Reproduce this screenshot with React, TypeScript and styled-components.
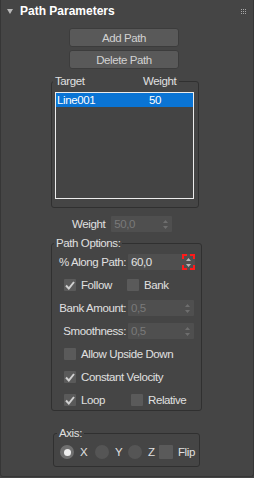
import React from "react";
import styled, { createGlobalStyle } from "styled-components";

const GlobalStyle = createGlobalStyle`
  html, body {
    margin: 0;
    padding: 0;
    background: #444444;
  }
  body {
    font-family: "Liberation Sans", Arial, sans-serif;
    font-size: 11.5px;
    letter-spacing: -0.4px;
    color: #e0e0e0;
  }
`;

const Panel = styled.div`
  box-sizing: border-box;
  width: 254px;
  height: 477px;
  border: 1px solid #363636;
  border-top: 0;
  border-radius: 0 0 3px 3px;
  background: #454545;
  display: flex;
  flex-direction: column;
`;

const TitleBar = styled.div`
  height: 22px;
  display: flex;
  align-items: center;
  padding: 0 7px 0 6px;
`;

const Title = styled.div`
  margin-left: 7px;
  font-size: 12px;
  font-weight: bold;
  letter-spacing: 0;
  color: #ffffff;
`;

const Grip = styled.svg`
  margin-left: auto;
`;

const Body = styled.div`
  display: flex;
  flex-direction: column;
  align-items: flex-start;
  padding-left: 50px;
`;

const Button = styled.div<{ $top: number }>`
  box-sizing: border-box;
  width: 110px;
  height: 19px;
  margin: ${(p) => p.$top}px 0 0 18px;
  background: #595959;
  border: 1px solid #3c3c3c;
  border-radius: 3px;
  display: flex;
  align-items: center;
  justify-content: center;
  color: #d2d2d2;
`;

const Group = styled.fieldset<{ $width: number; $top: number; $left?: number }>`
  box-sizing: border-box;
  width: ${(p) => p.$width}px;
  min-width: 0;
  margin: ${(p) => p.$top}px 0 0 ${(p) => p.$left || 0}px;
  padding: 0;
  border: 1px solid #303030;
  border-radius: 3px;
`;

const Legend = styled.legend<{ $shift: number }>`
  margin-left: ${(p) => p.$shift}px;
  padding: 0 2px;
  line-height: 14px;
  height: 14px;
  color: #e0e0e0;
`;

const ListLegend = styled(Legend)`
  display: flex;
  width: 126px;
  box-sizing: border-box;
`;

const LegendCol = styled.span<{ $width?: number }>`
  width: ${(p) => (p.$width ? `${p.$width}px` : "auto")};
`;

const ListBox = styled.div`
  box-sizing: border-box;
  width: 139px;
  height: 107px;
  margin: 4px 0 8px 3px;
  border: 1px solid #ececec;
  background: #444444;
`;

const ListRow = styled.div<{ $selected?: boolean }>`
  height: 14px;
  display: grid;
  grid-template-columns: 92px 1fr;
  align-items: center;
  padding-left: 1px;
  background: ${(p) => (p.$selected ? "#0a74d4" : "transparent")};
  color: #ffffff;
`;

const WeightRow = styled.div`
  display: flex;
  align-items: center;
  gap: 6px;
  margin: 8px 0 0 21px;
  height: 16px;
`;

const Label = styled.span`
  color: #e0e0e0;
  white-space: nowrap;
`;

const RightLabel = styled(Label)`
  text-align: right;
`;

const Field = styled.div<{ $width: number; $disabled?: boolean }>`
  position: relative;
  box-sizing: border-box;
  width: ${(p) => p.$width}px;
  height: 16px;
  background: #4f4f4f;
  border-radius: 1px;
  display: flex;
  align-items: center;
  padding: 0 3px;
  color: ${(p) => (p.$disabled ? "#7a7a7a" : "#e4e4e4")};
`;

const Arrows = styled.svg`
  margin-left: auto;
  margin-right: 1px;
`;

const Marks = styled.svg`
  position: absolute;
  right: 0;
  top: 0;
`;

const Options = styled.div`
  display: flex;
  flex-direction: column;
  gap: 7px;
  padding: 4px 0 2px 0;
`;

const SpinRow = styled.div`
  display: grid;
  grid-template-columns: 74px 66px;
  column-gap: 2px;
  height: 16px;
  align-items: center;
`;

const CheckRow = styled.div`
  display: flex;
  align-items: center;
  height: 16px;
  padding-left: 12px;
`;

const CheckItem = styled.div<{ $width?: number }>`
  display: flex;
  align-items: center;
  gap: 5px;
  width: ${(p) => (p.$width ? `${p.$width}px` : "auto")};
`;

const Box = styled.div<{ $size: number }>`
  width: ${(p) => p.$size}px;
  height: ${(p) => p.$size}px;
  background: #5a5a5a;
  border-radius: 1px;
  display: flex;
  align-items: center;
  justify-content: center;
`;

const AxisRow = styled.div`
  display: flex;
  align-items: center;
  height: 14px;
  padding: 5px 0 7px 6px;
`;

const RadioItem = styled.div<{ $width: number }>`
  display: flex;
  align-items: center;
  gap: 6px;
  width: ${(p) => p.$width}px;
`;

const Radio = styled.div<{ $on?: boolean }>`
  box-sizing: border-box;
  width: 14px;
  height: 14px;
  border-radius: 50%;
  background: ${(p) => (p.$on ? "#707070" : "#555555")};
  display: flex;
  align-items: center;
  justify-content: center;
  &::after {
    content: "";
    display: ${(p) => (p.$on ? "block" : "none")};
    width: 7px;
    height: 7px;
    border-radius: 50%;
    background: #efefef;
  }
`;

const Spinner = ({ value, width, disabled, marked }: { value: string; width: number; disabled?: boolean; marked?: boolean }) => (
  <Field $width={width} $disabled={disabled}>
    {value}
    <Arrows width="5" height="9" viewBox="0 0 5 9">
      <path d="M2.5 0 L5 3 L0 3 Z M0 6 L5 6 L2.5 9 Z" fill={disabled ? "#6e6e6e" : "#b4b4b4"} />
    </Arrows>
    {marked && (
      <Marks width="13" height="16" viewBox="0 0 13 16">
        <path
          d="M1 5 V1 H5 M8 1 H12 V5 M12 11 V15 H8 M5 15 H1 V11"
          fill="none"
          stroke="#ff1a1a"
          strokeWidth="2"
        />
      </Marks>
    )}
  </Field>
);

const Check = ({ checked, size = 12 }: { checked?: boolean; size?: number }) => (
  <Box $size={size}>
    {checked && (
      <svg width="10" height="9" viewBox="0 0 10 9">
        <path d="M1 4.5 L3.8 7.5 L9 1" fill="none" stroke="#d0d0d0" strokeWidth="2" />
      </svg>
    )}
  </Box>
);

const App: React.FC = () => {
  return (
    <>
      <GlobalStyle />
      <Panel>
        <TitleBar>
          <svg width="6" height="5" viewBox="0 0 6 5">
            <path d="M0 0 H6 L3 5 Z" fill="#b8b8b8" />
          </svg>
          <Title>Path Parameters</Title>
          <Grip width="5" height="5" viewBox="0 0 5 5">
            {[0, 2, 4].map((x) =>
              [0, 2, 4].map((y) => <rect key={`${x}-${y}`} x={x} y={y} width="1" height="1" fill="#a8a8a8" />)
            )}
          </Grip>
        </TitleBar>

        <Body>
          <Button $top={6}>Add Path</Button>
          <Button $top={3}>Delete Path</Button>

          <Group $width={148} $top={5}>
            <ListLegend $shift={1}>
              <LegendCol $width={88}>Target</LegendCol>
              <LegendCol>Weight</LegendCol>
            </ListLegend>
            <ListBox>
              <ListRow $selected>
                <span>Line001</span>
                <span>50</span>
              </ListRow>
            </ListBox>
          </Group>

          <WeightRow>
            <Label>Weight</Label>
            <Spinner value="50,0" width={61} disabled />
          </WeightRow>

          <Group $width={151} $top={4}>
            <Legend $shift={2}>Path Options:</Legend>
            <Options>
              <SpinRow>
                <RightLabel>% Along Path:</RightLabel>
                <Spinner value="60,0" width={67} marked />
              </SpinRow>
              <CheckRow>
                <CheckItem $width={63}>
                  <Check checked />
                  <Label>Follow</Label>
                </CheckItem>
                <CheckItem>
                  <Check />
                  <Label>Bank</Label>
                </CheckItem>
              </CheckRow>
              <SpinRow>
                <RightLabel>Bank Amount:</RightLabel>
                <Spinner value="0,5" width={66} disabled />
              </SpinRow>
              <SpinRow>
                <RightLabel>Smoothness:</RightLabel>
                <Spinner value="0,5" width={66} disabled />
              </SpinRow>
              <CheckRow>
                <CheckItem>
                  <Check />
                  <Label>Allow Upside Down</Label>
                </CheckItem>
              </CheckRow>
              <CheckRow>
                <CheckItem>
                  <Check checked />
                  <Label>Constant Velocity</Label>
                </CheckItem>
              </CheckRow>
              <CheckRow>
                <CheckItem $width={67}>
                  <Check checked />
                  <Label>Loop</Label>
                </CheckItem>
                <CheckItem>
                  <Check />
                  <Label>Relative</Label>
                </CheckItem>
              </CheckRow>
            </Options>
          </Group>

          <Group $width={147} $top={15} $left={2}>
            <Legend $shift={3}>Axis:</Legend>
            <AxisRow>
              <RadioItem $width={35}>
                <Radio $on />
                <Label>X</Label>
              </RadioItem>
              <RadioItem $width={33}>
                <Radio />
                <Label>Y</Label>
              </RadioItem>
              <RadioItem $width={31}>
                <Radio />
                <Label>Z</Label>
              </RadioItem>
              <CheckItem>
                <Check size={14} />
                <Label>Flip</Label>
              </CheckItem>
            </AxisRow>
          </Group>
        </Body>
      </Panel>
    </>
  );
};

export default App;
